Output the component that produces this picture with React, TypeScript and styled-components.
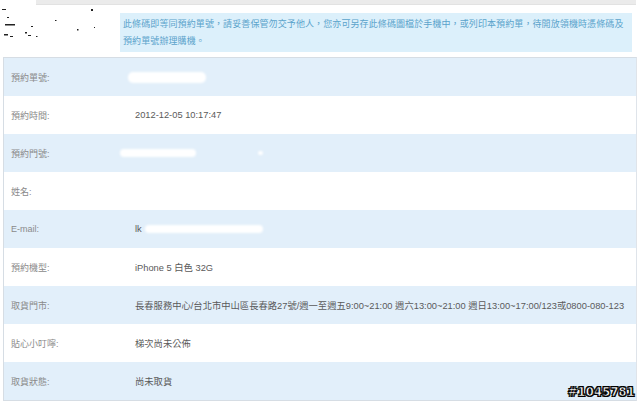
import React from "react";
import styled, { createGlobalStyle } from "styled-components";

const Global = createGlobalStyle`
  html, body { margin: 0; padding: 0; background: #ffffff; }
  body {
    width: 640px;
    height: 403px;
    overflow: hidden;
    font-family: "Liberation Sans", Arial, "Noto Sans CJK TC", sans-serif;
  }
`;

const Page = styled.div`
  position: relative;
  width: 640px;
  height: 403px;
  background: #fff;
`;

const TopStrip = styled.div`
  margin-left: 36px;
  margin-right: 4px;
  height: 4px;
  background: #ebebeb;
  border-bottom: 1px solid #e2e2e2;
`;

const Header = styled.div`
  display: flex;
  align-items: flex-start;
  padding-top: 8px;
  height: 44px;
`;

const Barcode = styled.div`
  width: 120px;
  height: 40px;
  margin-top: -9px;
  flex: none;
`;

const Notice = styled.div`
  flex: 1;
  margin-right: 8px;
  background: #dcf0fb;
  color: #5aa3cb;
  font-family: "Noto Sans CJK TC", sans-serif;
  font-size: 9px;
  letter-spacing: 0.1px;
  line-height: 17px;
  padding: 2px 3px 3px 3px;
  white-space: nowrap;
  overflow: hidden;
`;

const Table = styled.div`
  margin: 0 3px 0 3px;
  border: 1px solid #d6dde4;
  border-right-color: #dfe4ea;
`;

const Row = styled.div<{ $shaded: boolean }>`
  display: grid;
  grid-template-columns: 131px 1fr;
  align-items: center;
  height: 38px;
  background: ${(p) => (p.$shaded ? "#e2effa" : "#ffffff")};
`;

const Label = styled.div`
  padding-left: 7px;
  color: #8a8a8a;
  font-size: 9px;
  font-family: "Liberation Sans", "Noto Sans CJK TC", sans-serif;
`;

const Value = styled.div`
  color: #5a5a5a;
  font-size: 9.3px;
  white-space: nowrap;
  display: flex;
  align-items: center;
  font-family: "Liberation Sans", "Noto Sans CJK TC", sans-serif;
`;

const Blot = styled.span<{ $w: number; $h: number; $ml: number }>`
  display: inline-block;
  width: ${(p) => p.$w}px;
  height: ${(p) => p.$h}px;
  margin-left: ${(p) => p.$ml}px;
  background: #ffffff;
  border-radius: 5px;
  filter: blur(0.8px);
`;

const Watermark = styled.div`
  position: absolute;
  right: 5px;
  bottom: 4px;
  color: #ffffff;
  font-family: "DejaVu Sans", sans-serif;
  font-weight: bold;
  font-size: 11.5px;
  letter-spacing: 0.2px;
  -webkit-text-stroke: 0.6px #000;
  text-shadow: 0 0 1px #000, 1px 1px 0 #000, -1px -1px 0 #000, 1px -1px 0 #000, -1px 1px 0 #000;
`;

const rows: { label: string; value: React.ReactNode }[] = [
  { label: "預約單號:", value: <Blot $w={78} $h={11} $ml={-7} /> },
  { label: "預約時間:", value: "2012-12-05 10:17:47" },
  {
    label: "預約門號:",
    value: (
      <>
        <Blot $w={76} $h={8} $ml={-15} />
        <Blot $w={5} $h={4} $ml={62} />
      </>
    ),
  },
  { label: "姓名:", value: "" },
  {
    label: "E-mail:",
    value: (
      <>
        lk
        <Blot $w={118} $h={8} $ml={3} />
      </>
    ),
  },
  { label: "預約機型:", value: "iPhone 5 白色 32G" },
  {
    label: "取貨門市:",
    value:
      "長春服務中心/台北市中山區長春路27號/週一至週五9:00~21:00 週六13:00~21:00 週日13:00~17:00/123或0800-080-123",
  },
  { label: "貼心小叮嚀:", value: "梯次尚未公佈" },
  { label: "取貨狀態:", value: "尚未取貨" },
];

export default function App() {
  return (
    <Page>
      <Global />
      <TopStrip />
      <Header>
        <Barcode>
          <svg width="120" height="40" viewBox="0 0 120 40">
            <g fill="#222">
              <rect x="2" y="5" width="4" height="1" />
              <rect x="91" y="5" width="2" height="2" />
              <rect x="7" y="13" width="2" height="1" />
              <rect x="5" y="20" width="10" height="1.5" />
              <rect x="31" y="22" width="2" height="1" />
              <rect x="55" y="16" width="1.5" height="1" />
              <rect x="77" y="25" width="1.5" height="1.5" />
              <rect x="94" y="23" width="1" height="1" />
              <rect x="4" y="30" width="4" height="1.5" />
              <rect x="10" y="32" width="3" height="1" />
              <rect x="25" y="28" width="2" height="1.5" />
              <rect x="28" y="31" width="3" height="1" />
              <rect x="36" y="32" width="1.5" height="1" />
            </g>
          </svg>
        </Barcode>
        <Notice>
          此條碼即等同預約單號，請妥善保管勿交予他人，您亦可另存此條碼圖檔於手機中，或列印本預約單，待開放領機時憑條碼及
          <br />
          預約單號辦理購機。
        </Notice>
      </Header>
      <Table>
        {rows.map((r, i) => (
          <Row key={r.label} $shaded={i % 2 === 0}>
            <Label>{r.label}</Label>
            <Value>{r.value}</Value>
          </Row>
        ))}
      </Table>
      <Watermark>#1045781</Watermark>
    </Page>
  );
}
